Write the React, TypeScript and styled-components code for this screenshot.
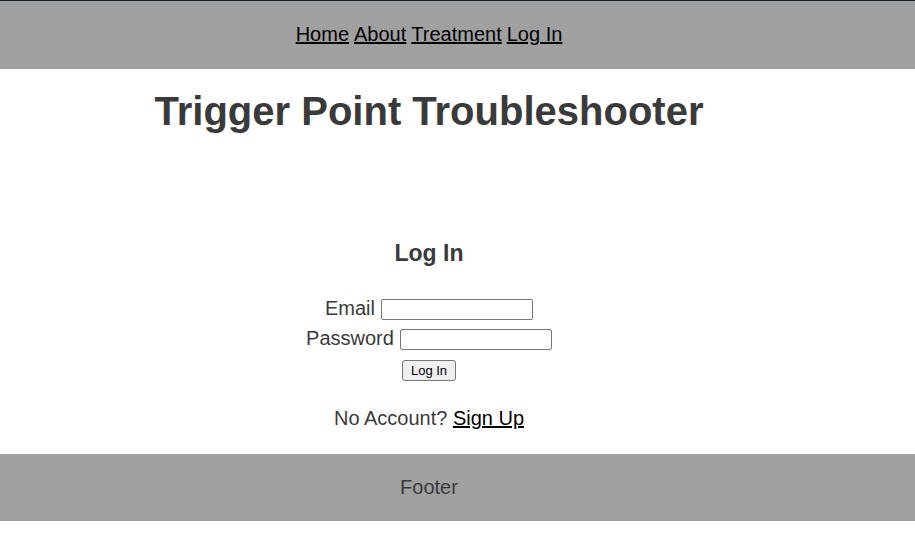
import React from 'react'
import styled, { createGlobalStyle } from 'styled-components'

const GlobalStyle = createGlobalStyle`
  body {
    margin: 0;
    font-family: 'Liberation Sans', Arial, sans-serif;
    color: #3a3a3a;
    background: #ffffff;
  }
`

export default function App(): JSX.Element {
  const links = ['Home', 'About', 'Treatment', 'Log In']
  return (
    <>
      <GlobalStyle />
      <Header>
        <Inner>
          <Nav>
            {links.map((link) => (
              <NavLink key={link} href="#">
                {link}
              </NavLink>
            ))}
          </Nav>
        </Inner>
      </Header>
      <Inner>
        <Title>Trigger Point Troubleshooter</Title>
        <LoginSection>
          <Heading>Log In</Heading>
          <Form onSubmit={(e) => e.preventDefault()}>
            <Row>
              <Label htmlFor="email">Email</Label>
              <Input id="email" type="text" />
            </Row>
            <Row>
              <Label htmlFor="password">Password</Label>
              <Input id="password" type="password" />
            </Row>
            <SubmitButton type="submit">Log In</SubmitButton>
          </Form>
          <SignUpLine>
            No Account? <SignUpLink href="#">Sign Up</SignUpLink>
          </SignUpLine>
        </LoginSection>
      </Inner>
      <Footer>
        <Inner>
          <FooterText>Footer</FooterText>
        </Inner>
      </Footer>
    </>
  )
}

const Inner = styled.div`
  width: 858px;
  display: flex;
  flex-direction: column;
  align-items: center;
`

const Header = styled.header`
  border-top: 1px solid #1b2331;
  background: #a0a0a0;
  height: 68px;
  display: flex;
  align-items: center;
`

const Nav = styled.nav`
  display: flex;
  gap: 5px;
  font-size: 20px;
  line-height: 24px;
  margin-top: -2px;
`

const NavLink = styled.a`
  color: #000;
  text-decoration: underline;
`

const Title = styled.h1`
  margin: 19px 0 0;
  font-size: 40px;
  line-height: 46px;
  font-weight: bold;
  color: #3a3a3a;
`

const LoginSection = styled.section`
  display: flex;
  flex-direction: column;
  align-items: center;
  margin-top: 106px;
`

const Heading = styled.h2`
  margin: 0;
  font-size: 23px;
  line-height: 26px;
  font-weight: bold;
`

const Form = styled.form`
  display: flex;
  flex-direction: column;
  align-items: center;
  margin-top: 28px;
`

const Row = styled.div`
  display: flex;
  align-items: center;
  gap: 6px;
  height: 30px;
`

const Label = styled.label`
  font-size: 20px;
  line-height: 24px;
  margin-top: -2px;
`

const Input = styled.input`
  box-sizing: border-box;
  width: 152px;
  height: 21px;
  border: 1px solid #767676;
  border-radius: 2px;
  padding: 1px 2px;
  font-size: 13px;
  background: #fff;
`

const SubmitButton = styled.button`
  box-sizing: border-box;
  margin-top: 6px;
  width: 54px;
  height: 21px;
  padding: 0;
  font-family: 'Liberation Sans', Arial, sans-serif;
  font-size: 13px;
  color: #000;
  background: #efefef;
  border: 1px solid #767676;
  border-radius: 3px;
`

const SignUpLine = styled.p`
  margin: 25px 0 0;
  font-size: 20px;
  line-height: 24px;
`

const SignUpLink = styled.a`
  color: #000;
  text-decoration: underline;
`

const Footer = styled.footer`
  margin-top: 24px;
  background: #a0a0a0;
  height: 67px;
  display: flex;
  align-items: center;
`

const FooterText = styled.p`
  margin: -2px 0 0;
  font-size: 20px;
  line-height: 24px;
`
